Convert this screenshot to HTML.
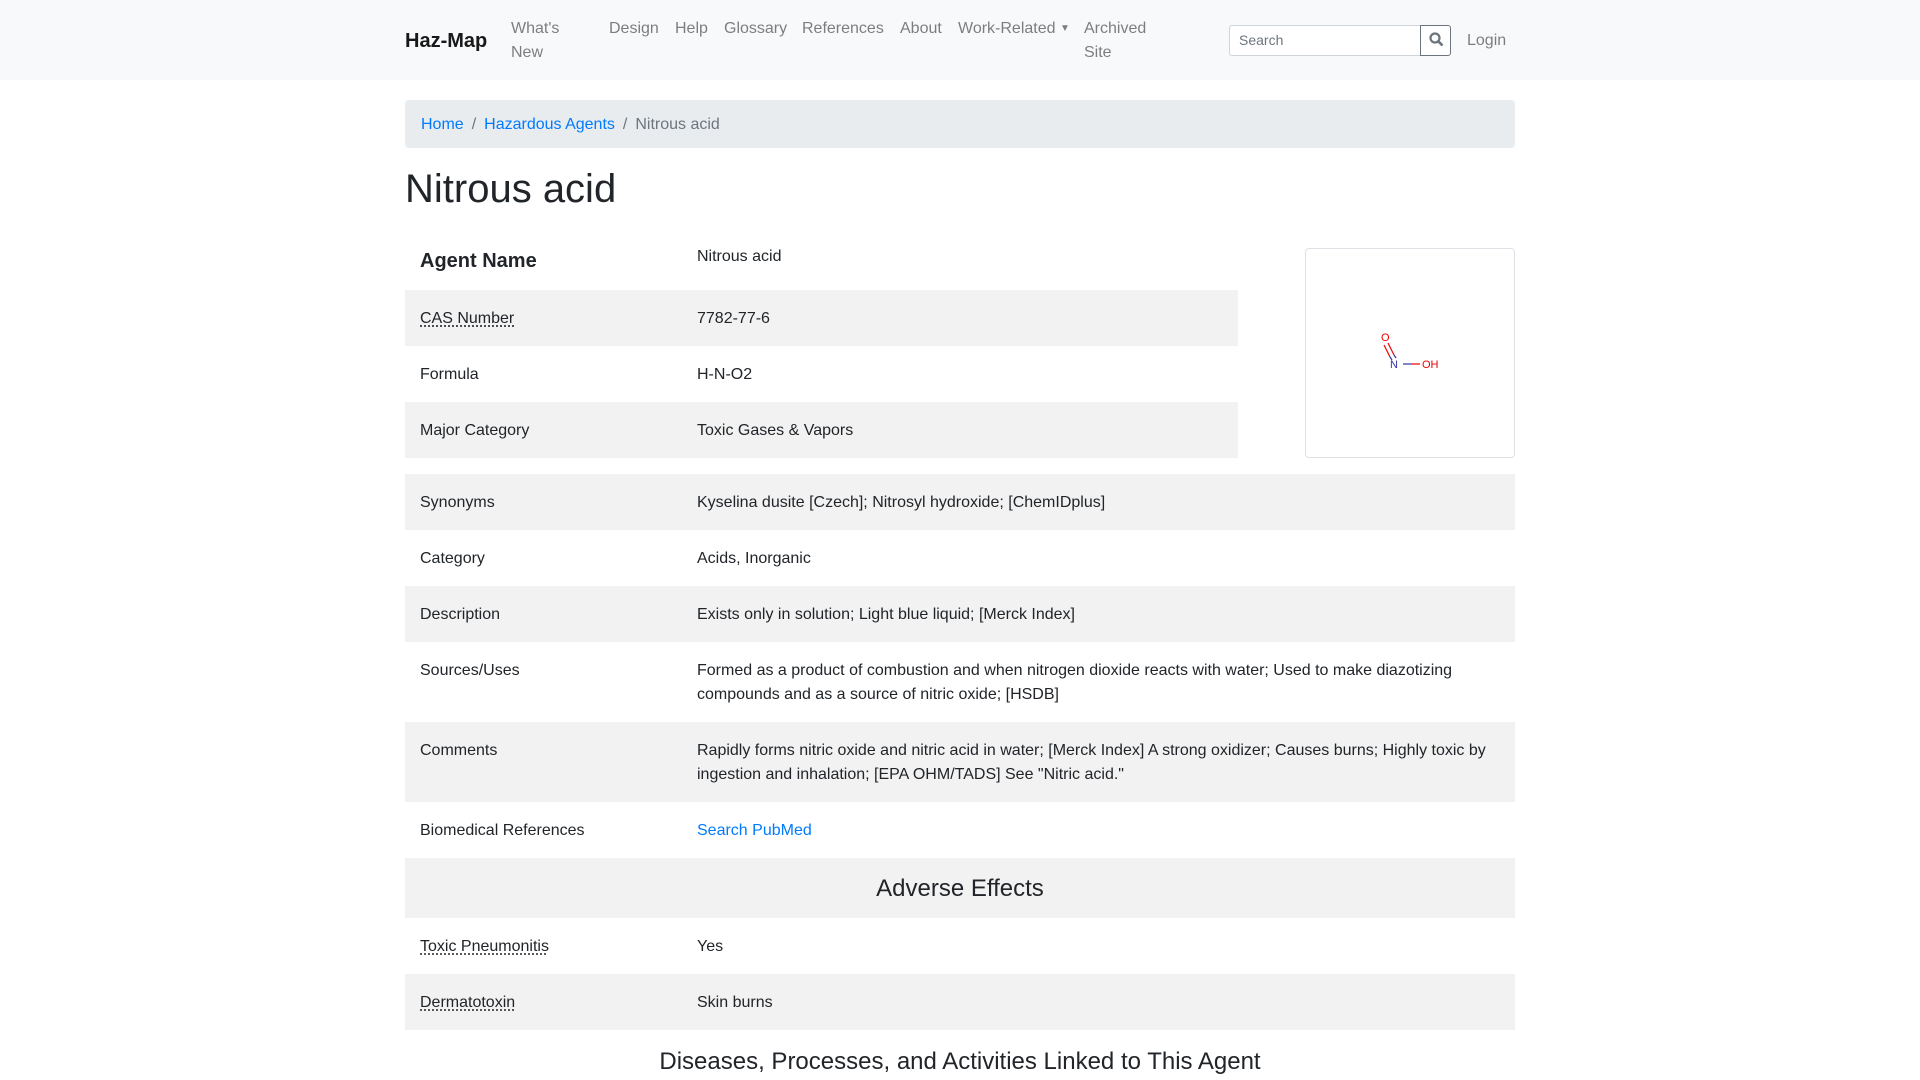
<!DOCTYPE html>
<html><head><meta charset="utf-8"><style>
*{box-sizing:border-box;margin:0;padding:0}
body{width:1920px;height:1080px;overflow:hidden;font-family:"Liberation Sans",Arial,sans-serif;font-size:16px;line-height:24px;color:#212529;background:#fff;position:relative}
.nav{position:absolute;left:0;top:0;width:1920px;height:80px;background:#f8f9fa}
.a{position:absolute;color:rgba(0,0,0,.5);font-size:16px;line-height:24px}
.brand{position:absolute;left:405px;top:27px;font-size:20px;line-height:28px;font-weight:bold;color:rgba(0,0,0,.9)}
.search{position:absolute;left:1229px;top:25px;width:192px;height:31px;border:1px solid #ced4da;border-radius:3px 0 0 3px;background:#fff;font-size:14px;color:#6c757d;padding:4px 9px;line-height:20px}
.btn{position:absolute;left:1420px;top:25px;width:31px;height:31px;border:1px solid #6c757d;border-radius:0 3px 3px 0;background:#fff}
.bc{position:absolute;left:405px;top:100px;width:1110px;height:48px;background:#e9ecef;border-radius:4px;padding:13px 16px 11px}
.bc a{color:#007bff;text-decoration:none}
.bc .s{color:#6c757d;padding:0 8px}
h1{position:absolute;left:405px;top:165px;font-size:40px;line-height:48px;font-weight:500}
table{position:absolute;left:405px;border-collapse:collapse;table-layout:fixed}
td{padding:17px 15px 15px;vertical-align:top}
tr.st td{background:#f2f2f2}
abbr{text-decoration:underline dotted;text-underline-offset:3px}
.img{position:absolute;left:1305px;top:248px;width:210px;height:210px;border:1px solid #dee2e6;border-radius:4px}
h4{font-size:24px;line-height:28px;font-weight:500;text-align:center}
</style></head><body>
<div class="nav">
<div class="brand">Haz-Map</div>
<div class="a" style="left:511px;top:17px">What's<br>New</div>
<div class="a" style="left:609px;top:17px">Design</div>
<div class="a" style="left:675px;top:17px">Help</div>
<div class="a" style="left:724px;top:17px">Glossary</div>
<div class="a" style="left:802px;top:17px">References</div>
<div class="a" style="left:900px;top:17px">About</div>
<div class="a" style="left:958px;top:17px">Work-Related <span style="font-size:10px;vertical-align:2px">▼</span></div>
<div class="a" style="left:1084px;top:17px">Archived<br>Site</div>
<div class="search">Search</div>
<div class="btn"><svg width="31" height="29" viewBox="0 0 31 29"><circle cx="14" cy="12" r="4.5" fill="none" stroke="#6c757d" stroke-width="2.2"/><path d="M17.2 15.2l3.5 3.5" stroke="#6c757d" stroke-width="2.6" stroke-linecap="round"/></svg></div>
<div class="a" style="left:1467px;top:29px">Login</div>
</div>
<div class="bc"><a>Home</a><span class="s">/</span><a>Hazardous Agents</a><span class="s">/</span><span style="color:#6c757d">Nitrous acid</span></div>
<h1>Nitrous acid</h1>
<table style="top:234px;width:833px">
<colgroup><col style="width:277px"><col></colgroup>
<tr><td style="font-size:20px;font-weight:bold;padding-top:15px;padding-bottom:17px">Agent Name</td><td style="padding-top:11px">Nitrous acid</td></tr>
<tr class="st"><td><abbr>CAS Number</abbr></td><td>7782-77-6</td></tr>
<tr><td>Formula</td><td>H-N-O2</td></tr>
<tr class="st"><td>Major Category</td><td>Toxic Gases &amp; Vapors</td></tr>
</table>
<div class="img"><svg width="208" height="208" viewBox="0 0 208 208">
<text x="75" y="92" font-size="11" fill="#e00" font-family="Liberation Sans">O</text>
<line x1="78" y1="96" x2="84" y2="108" stroke="#e00" stroke-width="1.2"/><line x1="82" y1="94" x2="88" y2="106" stroke="#e00" stroke-width="1.2"/>
<line x1="84" y1="108" x2="86" y2="111" stroke="#33a" stroke-width="1.2"/><line x1="88" y1="106" x2="90" y2="109" stroke="#33a" stroke-width="1.2"/>
<text x="84" y="119" font-size="11" fill="#33a" font-family="Liberation Sans">N</text>
<line x1="97" y1="115" x2="106" y2="115" stroke="#33a" stroke-width="1.2"/><line x1="106" y1="115" x2="114" y2="115" stroke="#e00" stroke-width="1.2"/>
<text x="116" y="119" font-size="11" fill="#e00" font-family="Liberation Sans">OH</text>
</svg></div>
<table style="top:474px;width:1110px">
<colgroup><col style="width:277px"><col></colgroup>
<tr class="st"><td>Synonyms</td><td>Kyselina dusite [Czech]; Nitrosyl hydroxide; [ChemIDplus]</td></tr>
<tr><td>Category</td><td>Acids, Inorganic</td></tr>
<tr class="st"><td>Description</td><td>Exists only in solution; Light blue liquid; [Merck Index]</td></tr>
<tr><td>Sources/Uses</td><td>Formed as a product of combustion and when nitrogen dioxide reacts with water; Used to make diazotizing compounds and as a source of nitric oxide; [HSDB]</td></tr>
<tr class="st"><td>Comments</td><td>Rapidly forms nitric oxide and nitric acid in water; [Merck Index] A strong oxidizer; Causes burns; Highly toxic by ingestion and inhalation; [EPA OHM/TADS] See "Nitric acid."</td></tr>
<tr><td>Biomedical References</td><td style="color:#007bff">Search PubMed</td></tr>
<tr class="st"><td colspan="2" style="height:60px;padding:17px 16px 15px"><h4>Adverse Effects</h4></td></tr>
<tr><td><abbr>Toxic Pneumonitis</abbr></td><td>Yes</td></tr>
<tr class="st"><td><abbr>Dermatotoxin</abbr></td><td>Skin burns</td></tr>
</table>
<div style="position:absolute;left:405px;top:1048px;width:1110px"><h4>Diseases, Processes, and Activities Linked to This Agent</h4></div>
</body></html>
